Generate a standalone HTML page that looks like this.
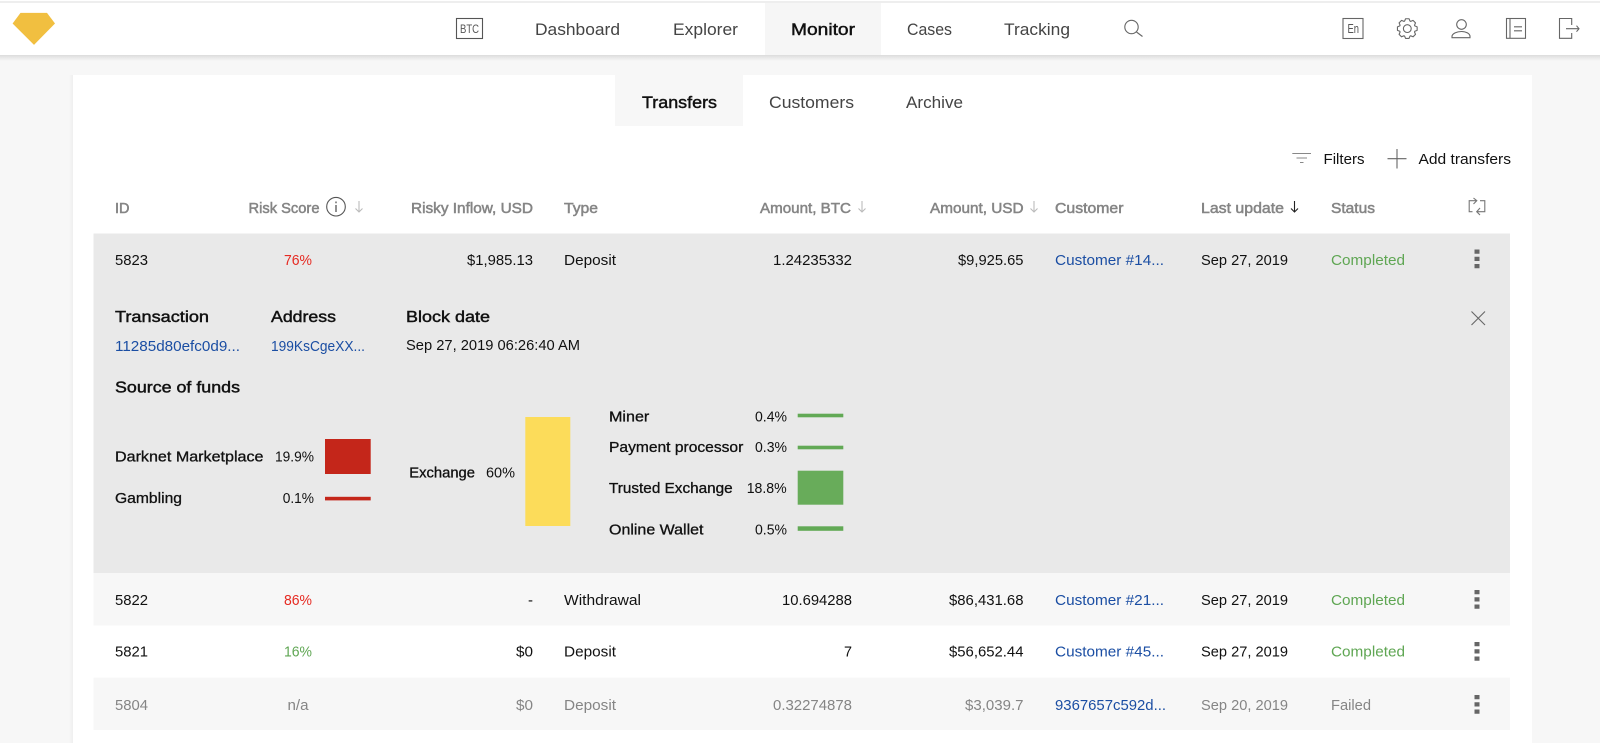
<!DOCTYPE html>
<html lang="en"><head><meta charset="utf-8"><title>Monitor - Transfers</title>
<style>
html,body{margin:0;padding:0;width:1600px;height:743px;overflow:hidden;background:#f7f7f7}
svg{position:absolute;left:0;top:0;display:block}
text{font-family:"Liberation Sans",Arial,sans-serif;font-size:14.4px;fill:#111}
.n{font-size:16.4px;fill:#444}
.s{stroke-width:.45px}
.th{fill:#858585;stroke:#858585;stroke-width:.5px}
.h{font-size:16px;stroke:#111;stroke-width:.45px}
.b{fill:#1b4ea3}.g{fill:#5fa653}.r{fill:#e62a22}.m{fill:#858585}
.l{stroke:#111;stroke-width:.3px}
.i{fill:none;stroke:#666;stroke-width:1.1}
</style></head><body>
<svg width="1600" height="743" viewBox="0 0 1600 743" xmlns="http://www.w3.org/2000/svg">
<defs>
<linearGradient id="hs" x1="0" y1="0" x2="0" y2="1"><stop offset="0" stop-color="#dcdcdc"/><stop offset="1" stop-color="#f7f7f7"/></linearGradient>
<linearGradient id="cs" x1="0" y1="0" x2="1" y2="0"><stop offset="0" stop-color="#f7f7f7"/><stop offset="1" stop-color="#efefef"/></linearGradient>
</defs>
<rect width="1600" height="743" fill="#f7f7f7"/>
<rect x="69" y="75" width="4" height="668" fill="url(#cs)"/>
<rect x="73" y="75" width="1459" height="668" fill="#fff"/>
<rect width="1600" height="3" fill="#fff"/><rect y="1" width="1600" height="2" fill="#eee"/>
<rect y="3" width="1600" height="52" fill="#fff"/>
<rect y="55" width="1600" height="6" fill="url(#hs)"/>
<rect x="765" y="3" width="116" height="52" fill="#f6f6f6"/>

<polygon points="12.6,23.5 20.5,12.9 47,12.9 55,23.5 34,44.9" fill="#f1bf40"/>
<rect x="456.5" y="18.5" width="26" height="20" class="i" style="stroke:#555"/>
<text x="460" y="33" style="font-size:12px;fill:#555" textLength="19" lengthAdjust="spacingAndGlyphs">BTC</text>
<text class="n" x="535" y="35" textLength="85" lengthAdjust="spacingAndGlyphs">Dashboard</text>
<text class="n" x="673" y="35" textLength="65" lengthAdjust="spacingAndGlyphs">Explorer</text>
<text class="n s" x="791" y="35" textLength="64" lengthAdjust="spacingAndGlyphs" style="fill:#111;stroke:#111">Monitor</text>
<text class="n" x="907" y="35" textLength="45" lengthAdjust="spacingAndGlyphs">Cases</text>
<text class="n" x="1004" y="35" textLength="66" lengthAdjust="spacingAndGlyphs">Tracking</text>
<circle cx="1131.5" cy="27" r="6.7" class="i"/><path d="M1136.5 32L1142.5 36.5" class="i"/>
<rect x="1343" y="18.5" width="20" height="20" class="i"/>
<text x="1347.5" y="33" style="font-size:12.5px;fill:#555" textLength="11.5" lengthAdjust="spacingAndGlyphs">En</text>
<polygon class="i" stroke-linejoin="round" transform="translate(1407.3 28.6)" points="7.5,-2.7 9.85,-1.74 9.85,1.74 7.5,2.7 7.21,3.39 8.2,5.73 5.73,8.2 3.39,7.21 2.7,7.5 1.74,9.85 -1.74,9.85 -2.7,7.5 -3.39,7.21 -5.73,8.2 -8.2,5.73 -7.21,3.39 -7.5,2.7 -9.85,1.74 -9.85,-1.74 -7.5,-2.7 -7.21,-3.39 -8.2,-5.73 -5.73,-8.2 -3.39,-7.21 -2.7,-7.5 -1.74,-9.85 1.74,-9.85 2.7,-7.5 3.39,-7.21 5.73,-8.2 8.2,-5.73 7.21,-3.39"/>
<circle cx="1407.3" cy="28.6" r="3.9" class="i"/>
<circle cx="1461.5" cy="24.5" r="4.8" class="i"/><path d="M1452 37.7V36.5C1452 33.5 1457 31.5 1461.5 31.5S1470 33.5 1470 36.5V37.7Z" class="i"/>
<rect x="1506.5" y="18.5" width="19" height="19.8" class="i"/><path d="M1510 18.5V38.3M1514 26.8H1522M1514 30.8H1522" class="i"/>
<path d="M1571.7 25V18.5H1559.5V38.3H1571.7V33M1566 28.7H1579M1576.5 25.7L1579 28.7L1576.5 31.7" class="i"/>

<rect x="615" y="75" width="128" height="51" fill="#f7f7f7"/>
<text class="n s" x="642" y="108" textLength="75" lengthAdjust="spacingAndGlyphs" style="fill:#111;stroke:#111">Transfers</text>
<text class="n" x="769" y="108" textLength="85" lengthAdjust="spacingAndGlyphs">Customers</text>
<text class="n" x="906" y="108" textLength="57" lengthAdjust="spacingAndGlyphs">Archive</text>

<path d="M1292.3 153.5H1311M1296.5 158H1307M1300 162.5H1303.5" class="i" style="stroke:#888"/>
<text x="1323.5" y="164" textLength="41" lengthAdjust="spacingAndGlyphs">Filters</text>
<path d="M1387.5 158.7H1406.5M1397 149V168.5" class="i" style="stroke:#666"/>
<text x="1418.5" y="164" textLength="92.5" lengthAdjust="spacingAndGlyphs">Add transfers</text>

<g>
<text class="th" x="115" y="213" textLength="14.5" lengthAdjust="spacingAndGlyphs">ID</text>
<text class="th" x="248.5" y="213" textLength="71" lengthAdjust="spacingAndGlyphs">Risk Score</text>
<circle cx="336" cy="206.7" r="9.3" class="i" style="stroke:#555"/>
<path d="M336 205V212M336 201.5V203.2" class="i" style="stroke:#555;stroke-width:1.3"/>
<path d="M359 201V212M355.5 208.5L359 212L362.5 208.5" class="i" style="stroke:#bbb"/>
<text class="th" x="411" y="213" textLength="122" lengthAdjust="spacingAndGlyphs">Risky Inflow, USD</text>
<text class="th" x="564" y="213" textLength="34" lengthAdjust="spacingAndGlyphs">Type</text>
<text class="th" x="760" y="213" textLength="91" lengthAdjust="spacingAndGlyphs">Amount, BTC</text>
<path d="M862 201V212M858.5 208.5L862 212L865.5 208.5" class="i" style="stroke:#bbb"/>
<text class="th" x="930" y="213" textLength="93.5" lengthAdjust="spacingAndGlyphs">Amount, USD</text>
<path d="M1034 201V212M1030.5 208.5L1034 212L1037.5 208.5" class="i" style="stroke:#bbb"/>
<text class="th" x="1055" y="213" textLength="68.5" lengthAdjust="spacingAndGlyphs">Customer</text>
<text class="th" x="1201" y="213" textLength="83" lengthAdjust="spacingAndGlyphs">Last update</text>
<path d="M1294.5 201V212M1291 208.5L1294.5 212L1298 208.5" class="i" style="stroke:#222"/>
<text class="th" x="1331" y="213" textLength="44" lengthAdjust="spacingAndGlyphs">Status</text>
<path d="M1476 200.7H1469.2V211.7H1472.5M1480 200.7H1484.8V211.7H1477M1473.5 198L1476.8 200.7L1473.5 204M1480 208L1476.7 211.7L1480 215" class="i" style="stroke:#777"/>
</g>

<rect x="93.5" y="233.5" width="1416.5" height="339.5" fill="#e9e9e9"/>
<text x="115" y="265" textLength="33" lengthAdjust="spacingAndGlyphs">5823</text>
<text class="r" x="284" y="265" textLength="28" lengthAdjust="spacingAndGlyphs">76%</text>
<text x="467" y="265" textLength="66" lengthAdjust="spacingAndGlyphs">$1,985.13</text>
<text x="564" y="265" textLength="52" lengthAdjust="spacingAndGlyphs">Deposit</text>
<text x="773" y="265" textLength="79" lengthAdjust="spacingAndGlyphs">1.24235332</text>
<text x="958" y="265" textLength="65.5" lengthAdjust="spacingAndGlyphs">$9,925.65</text>
<text class="b" x="1055" y="265" textLength="109" lengthAdjust="spacingAndGlyphs">Customer #14...</text>
<text x="1201" y="265" textLength="87" lengthAdjust="spacingAndGlyphs">Sep 27, 2019</text>
<text class="g" x="1331" y="265" textLength="74" lengthAdjust="spacingAndGlyphs">Completed</text>
<path d="M1474.5 249.5h5v4.3h-5zM1474.5 256.7h5v4.3h-5zM1474.5 264h5v4.3h-5z" fill="#666"/>

<text class="h" x="115" y="322" textLength="94" lengthAdjust="spacingAndGlyphs">Transaction</text>
<text class="h" x="271" y="322" textLength="65" lengthAdjust="spacingAndGlyphs">Address</text>
<text class="h" x="406" y="322" textLength="84" lengthAdjust="spacingAndGlyphs">Block date</text>
<text class="b" x="115" y="351" textLength="125" lengthAdjust="spacingAndGlyphs">11285d80efc0d9...</text>
<text class="b" x="271" y="351" textLength="94" lengthAdjust="spacingAndGlyphs">199KsCgeXX...</text>
<text x="406" y="350" textLength="174" lengthAdjust="spacingAndGlyphs">Sep 27, 2019 06:26:40 AM</text>
<path d="M1471.5 311.5L1485 325M1485 311.5L1471.5 325" class="i"/>
<text class="h" x="115" y="392.5" textLength="125" lengthAdjust="spacingAndGlyphs">Source of funds</text>

<text class="l" x="115" y="461.5" textLength="148.5" lengthAdjust="spacingAndGlyphs">Darknet Marketplace</text>
<text x="275" y="461.5" textLength="39" lengthAdjust="spacingAndGlyphs">19.9%</text>
<rect x="325" y="439" width="45.7" height="35" fill="#c4261a"/>
<text class="l" x="115" y="503" textLength="67" lengthAdjust="spacingAndGlyphs">Gambling</text>
<text x="282.7" y="503" textLength="31.3" lengthAdjust="spacingAndGlyphs">0.1%</text>
<rect x="325" y="496.8" width="45.7" height="3.6" fill="#c4261a"/>
<text class="l" x="409.3" y="477.5" textLength="65.7" lengthAdjust="spacingAndGlyphs">Exchange</text>
<text x="486" y="477.5" textLength="29" lengthAdjust="spacingAndGlyphs">60%</text>
<rect x="525.3" y="417" width="45" height="109" fill="#fcdc5a"/>
<text class="l" x="609" y="421.5" textLength="40.3" lengthAdjust="spacingAndGlyphs">Miner</text>
<text x="755" y="421.5" textLength="32" lengthAdjust="spacingAndGlyphs">0.4%</text>
<rect x="797.7" y="413.7" width="45.6" height="3.6" fill="#62a955"/>
<text class="l" x="609" y="452" textLength="134.3" lengthAdjust="spacingAndGlyphs">Payment processor</text>
<text x="755" y="452" textLength="32" lengthAdjust="spacingAndGlyphs">0.3%</text>
<rect x="797.7" y="445.7" width="45.6" height="3.6" fill="#62a955"/>
<text class="l" x="609" y="493" textLength="123.7" lengthAdjust="spacingAndGlyphs">Trusted Exchange</text>
<text x="746.7" y="493" textLength="40" lengthAdjust="spacingAndGlyphs">18.8%</text>
<rect x="797.7" y="470.7" width="45.6" height="34" fill="#68ac5a"/>
<text class="l" x="609" y="534.3" textLength="94.5" lengthAdjust="spacingAndGlyphs">Online Wallet</text>
<text x="755" y="534.3" textLength="32" lengthAdjust="spacingAndGlyphs">0.5%</text>
<rect x="797.7" y="526.3" width="45.6" height="4.5" fill="#62a955"/>

<rect x="93.5" y="573" width="1416.5" height="52.5" fill="#f7f7f7"/>
<text x="115" y="604.8" textLength="33" lengthAdjust="spacingAndGlyphs">5822</text>
<text class="r" x="284" y="604.8" textLength="28" lengthAdjust="spacingAndGlyphs">86%</text>
<text x="528" y="604.8" textLength="5" lengthAdjust="spacingAndGlyphs">-</text>
<text x="564" y="604.8" textLength="77" lengthAdjust="spacingAndGlyphs">Withdrawal</text>
<text x="782" y="604.8" textLength="70" lengthAdjust="spacingAndGlyphs">10.694288</text>
<text x="949" y="604.8" textLength="74.5" lengthAdjust="spacingAndGlyphs">$86,431.68</text>
<text class="b" x="1055" y="604.8" textLength="109" lengthAdjust="spacingAndGlyphs">Customer #21...</text>
<text x="1201" y="604.8" textLength="87" lengthAdjust="spacingAndGlyphs">Sep 27, 2019</text>
<text class="g" x="1331" y="604.8" textLength="74" lengthAdjust="spacingAndGlyphs">Completed</text>
<path d="M1474.5 590h5v4.3h-5zM1474.5 597.2h5v4.3h-5zM1474.5 604.5h5v4.3h-5z" fill="#666"/>

<text x="115" y="656.5" textLength="33" lengthAdjust="spacingAndGlyphs">5821</text>
<text class="g" x="284" y="656.5" textLength="28" lengthAdjust="spacingAndGlyphs">16%</text>
<text x="516" y="656.5" textLength="17" lengthAdjust="spacingAndGlyphs">$0</text>
<text x="564" y="656.5" textLength="52" lengthAdjust="spacingAndGlyphs">Deposit</text>
<text x="844" y="656.5" textLength="8" lengthAdjust="spacingAndGlyphs">7</text>
<text x="949" y="656.5" textLength="74.5" lengthAdjust="spacingAndGlyphs">$56,652.44</text>
<text class="b" x="1055" y="656.5" textLength="109" lengthAdjust="spacingAndGlyphs">Customer #45...</text>
<text x="1201" y="656.5" textLength="87" lengthAdjust="spacingAndGlyphs">Sep 27, 2019</text>
<text class="g" x="1331" y="656.5" textLength="74" lengthAdjust="spacingAndGlyphs">Completed</text>
<path d="M1474.5 642h5v4.3h-5zM1474.5 649.2h5v4.3h-5zM1474.5 656.5h5v4.3h-5z" fill="#666"/>

<rect x="93.5" y="677.7" width="1416.5" height="52.3" fill="#f7f7f7"/>
<text class="m" x="115" y="710" textLength="33" lengthAdjust="spacingAndGlyphs">5804</text>
<text class="m" x="287.5" y="710" textLength="21" lengthAdjust="spacingAndGlyphs">n/a</text>
<text class="m" x="516" y="710" textLength="17" lengthAdjust="spacingAndGlyphs">$0</text>
<text class="m" x="564" y="710" textLength="52" lengthAdjust="spacingAndGlyphs">Deposit</text>
<text class="m" x="773" y="710" textLength="79" lengthAdjust="spacingAndGlyphs">0.32274878</text>
<text class="m" x="965" y="710" textLength="58.5" lengthAdjust="spacingAndGlyphs">$3,039.7</text>
<text class="b" x="1055" y="710" textLength="111" lengthAdjust="spacingAndGlyphs">9367657c592d...</text>
<text class="m" x="1201" y="710" textLength="87" lengthAdjust="spacingAndGlyphs">Sep 20, 2019</text>
<text class="m" x="1331" y="710" textLength="40" lengthAdjust="spacingAndGlyphs">Failed</text>
<path d="M1474.5 695h5v4.3h-5zM1474.5 702.2h5v4.3h-5zM1474.5 709.5h5v4.3h-5z" fill="#666"/>
</svg>
</body></html>
